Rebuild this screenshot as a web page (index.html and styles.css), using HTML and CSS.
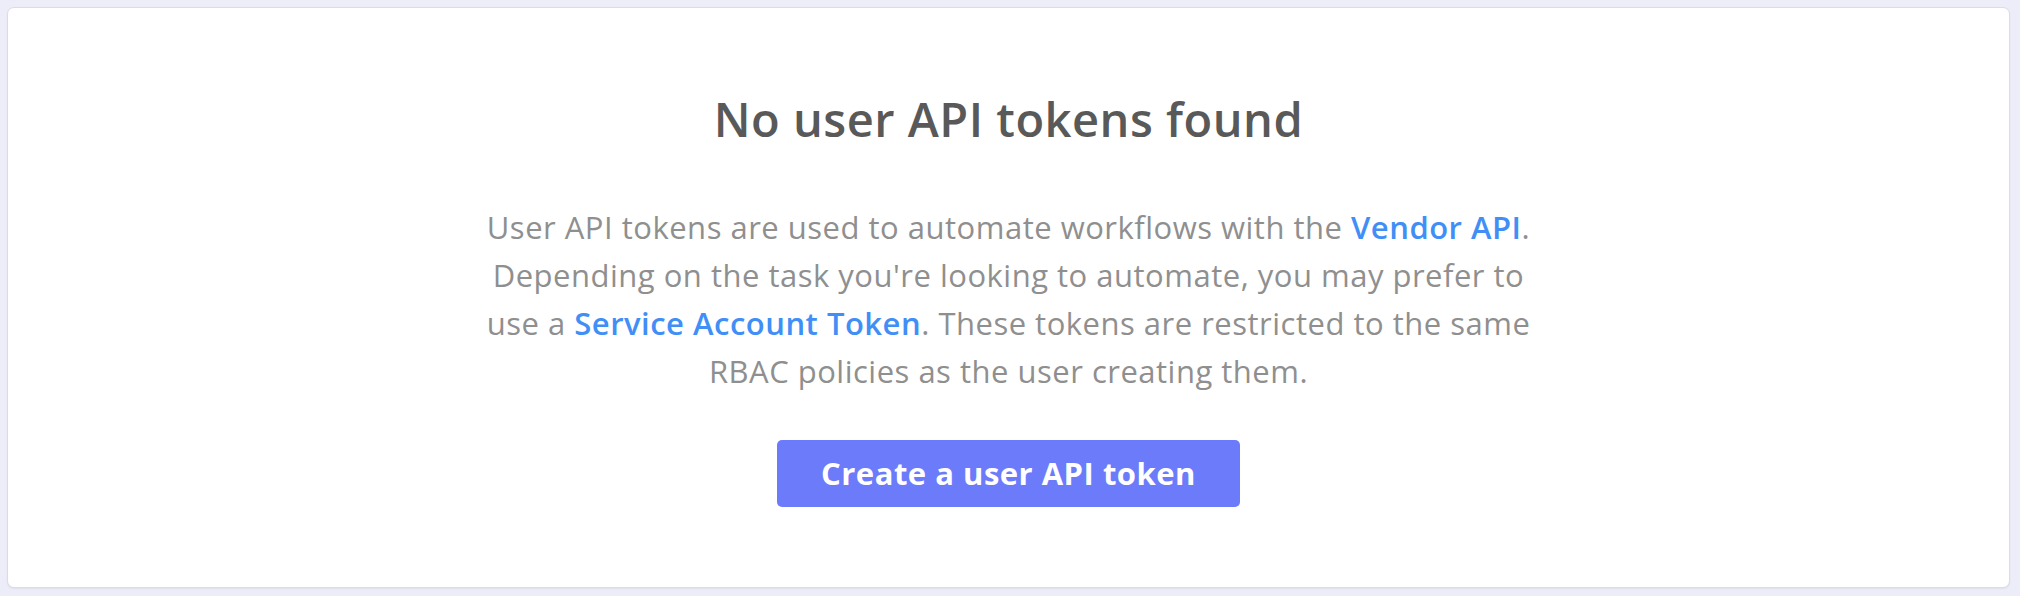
FILE: index.html
```html
<!DOCTYPE html>
<html>
<head>
<meta charset="utf-8">
<link rel="stylesheet" href="styles.css">
</head>
<body>
<div class="page">
  <div class="card">
    <h1 class="title">No user API tokens found</h1>
    <p class="desc">User API tokens are used to automate workflows with the <a class="link" href="#">Vendor API</a>. Depending on the task you're looking to automate, you may prefer to use a <a class="link" href="#">Service Account Token</a>. These tokens are restricted to the same RBAC policies as the user creating them.</p>
    <button class="btn">Create a user API token</button>
  </div>
</div>
</body>
</html>
```
FILE: styles.css
```css
html, body {
  margin: 0;
  padding: 0;
}
body {
  background: #ededf9;
  font-family: "Open Sans", "Liberation Sans", sans-serif;
}
.page {
  padding: 7px 10px 8px 7px;
  height: 596px;
  box-sizing: border-box;
}
.card {
  background: #fff;
  border: 1px solid #dcdce2;
  border-radius: 7px;
  box-shadow: 0 1px 2px rgba(0,0,0,0.06);
  height: 581px;
  box-sizing: border-box;
  display: flex;
  flex-direction: column;
  align-items: center;
  padding-top: 84px;
}
.title {
  margin: 0;
  font-size: 47px;
  letter-spacing: 0.5px;
  line-height: 55px;
  font-weight: 600;
  color: #595959;
}
.desc {
  margin: 56px 0 0 0;
  max-width: 1062px;
  text-align: center;
  font-size: 31px;
  letter-spacing: 0.5px;
  line-height: 48px;
  color: #8f8f8f;
}
.link {
  color: #418ff6;
  font-weight: 600;
  text-decoration: none;
}
.btn {
  margin-top: 45px;
  background: #6c7bfa;
  color: #fff;
  border: none;
  border-radius: 5px;
  font-family: "Open Sans", "Liberation Sans", sans-serif;
  font-weight: 700;
  font-size: 31px;
  letter-spacing: 0.5px;
  line-height: 41px;
  padding: 13px 44px;
}
```
